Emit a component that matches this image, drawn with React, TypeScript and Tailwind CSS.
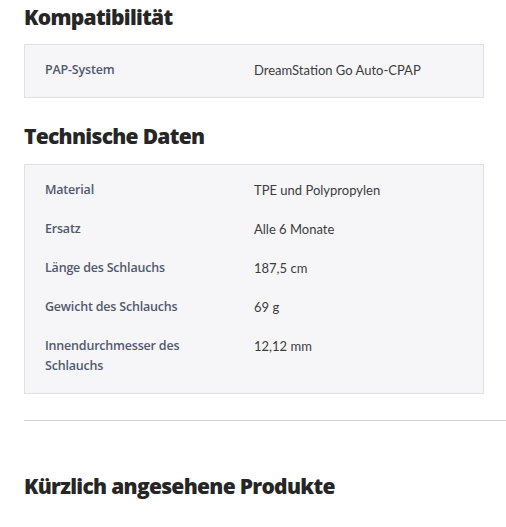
const compat = [["PAP-System", "DreamStation Go Auto-CPAP"]]

const specs = [
  ["Material", "TPE und Polypropylen"],
  ["Ersatz", "Alle 6 Monate"],
  ["Länge des Schlauchs", "187,5 cm"],
  ["Gewicht des Schlauchs", "69 g"],
  ["Innendurchmesser des Schlauchs", "12,12 mm"],
]

const SpecTable = ({ rows }: { rows: string[][] }) => (
  <div className="mr-[22px] flex flex-col gap-[19px] border border-[#e1e1e4] bg-[#f6f6f8] px-5 pt-[15px] pb-[17px]">
    {rows.map(([label, value]) => (
      <div key={label} className="grid grid-cols-2 text-[13px] leading-5">
        <span className="pr-8 font-['Open_Sans',sans-serif] text-[12.5px] font-semibold tracking-[-0.2px] text-[#505a6e]">
          {label}
        </span>
        <span className="text-[#3c3c3c]">{value}</span>
      </div>
    ))}
  </div>
)

const Heading = ({ children, className }: { children: string; className: string }) => (
  <h2
    className={`font-['Open_Sans',sans-serif] text-[21px] leading-7 font-extrabold tracking-[-0.7px] text-[#262626] ${className}`}
  >
    {children}
  </h2>
)

export default function App() {
  return (
    <div className="min-h-[527px] bg-white pl-6 font-['Lato',sans-serif]">
      <Heading className="pt-[3px]">Kompatibilität</Heading>
      <div className="mt-[13px]">
        <SpecTable rows={compat} />
      </div>
      <Heading className="mt-[24px]">Technische Daten</Heading>
      <div className="mt-[14px]">
        <SpecTable rows={specs} />
      </div>
      <hr className="mt-[26px] border-t border-[#cdd0dc]" />
      <Heading className="mt-[51px]">Kürzlich angesehene Produkte</Heading>
    </div>
  )
}
